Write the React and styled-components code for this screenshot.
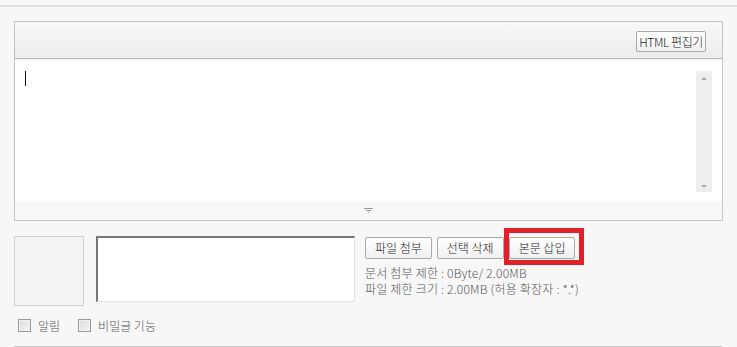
import React from 'react';
import styled, { createGlobalStyle } from 'styled-components';

const GlobalStyle = createGlobalStyle`
  html, body {
    margin: 0;
    padding: 0;
    background: #f7f7f7;
  }
  body {
    font-family: "Noto Sans CJK KR", "Noto Sans", sans-serif;
    font-size: 12px;
    font-weight: 300;
    color: #444;
  }
`;

const Page = styled.div`
  padding-top: 5px;
  height: 342px;
  overflow: hidden;
`;

const TopRule = styled.div`
  border-top: 2px solid #e3e3e3;
`;

const Content = styled.div`
  width: 709px;
  margin-left: 14px;
  padding-top: 14px;
`;

const Editor = styled.div`
  border: 1px solid #c6c6c6;
  height: 198px;
  display: flex;
  flex-direction: column;
  background: #fff;
`;

const Toolbar = styled.div`
  height: 37px;
  display: flex;
  justify-content: flex-end;
  align-items: flex-start;
  padding: 9px 16px 0 0;
  box-sizing: border-box;
  background: linear-gradient(#f8f8f8, #ececec);
  border-bottom: 1px solid #b9b9b9;
  box-shadow: 0 1px 2px rgba(0, 0, 0, 0.06);
`;

const Button = styled.button`
  position: relative;
  height: ${p => p.$h || 22}px;
  padding: 0 ${p => p.$pad || 9}px;
  font-family: inherit;
  font-size: 12px;
  font-weight: 300;
  letter-spacing: ${p => p.$tight ? '-0.4px' : '0'};
  color: #222;
  border: 1px solid #a9a9a9;
  border-radius: 2px;
  background: linear-gradient(#ffffff, #f0f0f0);
  line-height: 1;
  cursor: pointer;
`;

const Body = styled.div`
  flex: 1;
  display: flex;
  justify-content: space-between;
  padding: 12px 10px 9px 10px;
  position: relative;
`;

const Caret = styled.span`
  display: block;
  width: 1px;
  height: 15px;
  background: #111;
`;

const Scrollbar = styled.div`
  width: 16px;
  background: #eeeeee;
  display: flex;
  flex-direction: column;
  justify-content: space-between;
  align-items: center;
  padding: 6px 0 4px;
  box-sizing: border-box;
`;

const Arrow = styled.span`
  width: 0;
  height: 0;
  border-left: 3px solid transparent;
  border-right: 3px solid transparent;
  ${p => (p.$up ? 'border-bottom: 3px solid #aaa;' : 'border-top: 3px solid #aaa;')}
`;

const Resize = styled.div`
  height: 19px;
  background: #f8f8f8;
  display: flex;
  justify-content: center;
  align-items: center;
`;

const Attach = styled.div`
  display: flex;
  align-items: flex-start;
  margin-top: 15px;
`;

const Thumb = styled.div`
  width: 68px;
  height: 68px;
  border: 1px solid #cfcfcf;
  background: #f4f4f4;
`;

const FileList = styled.div`
  width: 256px;
  height: 63px;
  margin-left: 12px;
  background: #fff;
  border: 1px solid #e4e4e4;
  border-top: 2px solid #777;
  border-left: 2px solid #777;
`;

const Side = styled.div`
  margin-left: 10px;
  padding-top: 1px;
`;

const Buttons = styled.div`
  display: flex;
  gap: 5px;
`;

const Highlight = styled.span`
  position: absolute;
  left: -6px;
  top: -10px;
  right: -10px;
  bottom: -7px;
  border: 5px solid #e2202a;
  pointer-events: none;
`;

const Info = styled.div`
  margin-top: 6px;
  line-height: 16px;
  color: #555;
  font-size: 12px;
  letter-spacing: 0.2px;
`;

const Options = styled.div`
  display: flex;
  align-items: center;
  margin-top: 11px;
  padding-left: 4px;
`;

const Check = styled.label`
  display: flex;
  align-items: center;
  gap: 7px;
  margin-right: 18px;
  color: #555;
`;

const Box = styled.span`
  width: 11px;
  height: 11px;
  border: 1px solid #9a9a9a;
  background: linear-gradient(135deg, #dcdcdc, #f4f4f4);
  box-shadow: inset 0 0 0 1px #f2f2f2;
`;

const BottomRule = styled.div`
  margin-top: 12px;
  width: 708px;
  border-top: 1px solid #cacaca;
`;

export default function App() {
  return (
    <>
      <GlobalStyle />
      <Page>
        <TopRule />
        <Content>
          <Editor>
            <Toolbar>
              <Button $h={21} $pad={2} $tight>HTML 편집기</Button>
            </Toolbar>
            <Body>
              <Caret />
              <Scrollbar>
                <Arrow $up />
                <Arrow />
              </Scrollbar>
            </Body>
            <Resize>
              <svg width="9" height="5" viewBox="0 0 9 5">
                <rect x="0" y="0" width="9" height="1" fill="#999" />
                <rect x="2" y="2" width="5" height="1" fill="#999" />
                <rect x="4" y="4" width="1" height="1" fill="#999" />
              </svg>
            </Resize>
          </Editor>
          <Attach>
            <Thumb />
            <FileList />
            <Side>
              <Buttons>
                <Button>파일 첨부</Button>
                <Button>선택 삭제</Button>
                <Button>
                  본문 삽입
                  <Highlight />
                </Button>
              </Buttons>
              <Info>
                문서 첨부 제한 : 0Byte/ 2.00MB
                <br />
                파일 제한 크기 : 2.00MB (허용 확장자 : *.*)
              </Info>
            </Side>
          </Attach>
          <Options>
            <Check><Box />알림</Check>
            <Check><Box />비밀글 기능</Check>
          </Options>
          <BottomRule />
        </Content>
      </Page>
    </>
  );
}
